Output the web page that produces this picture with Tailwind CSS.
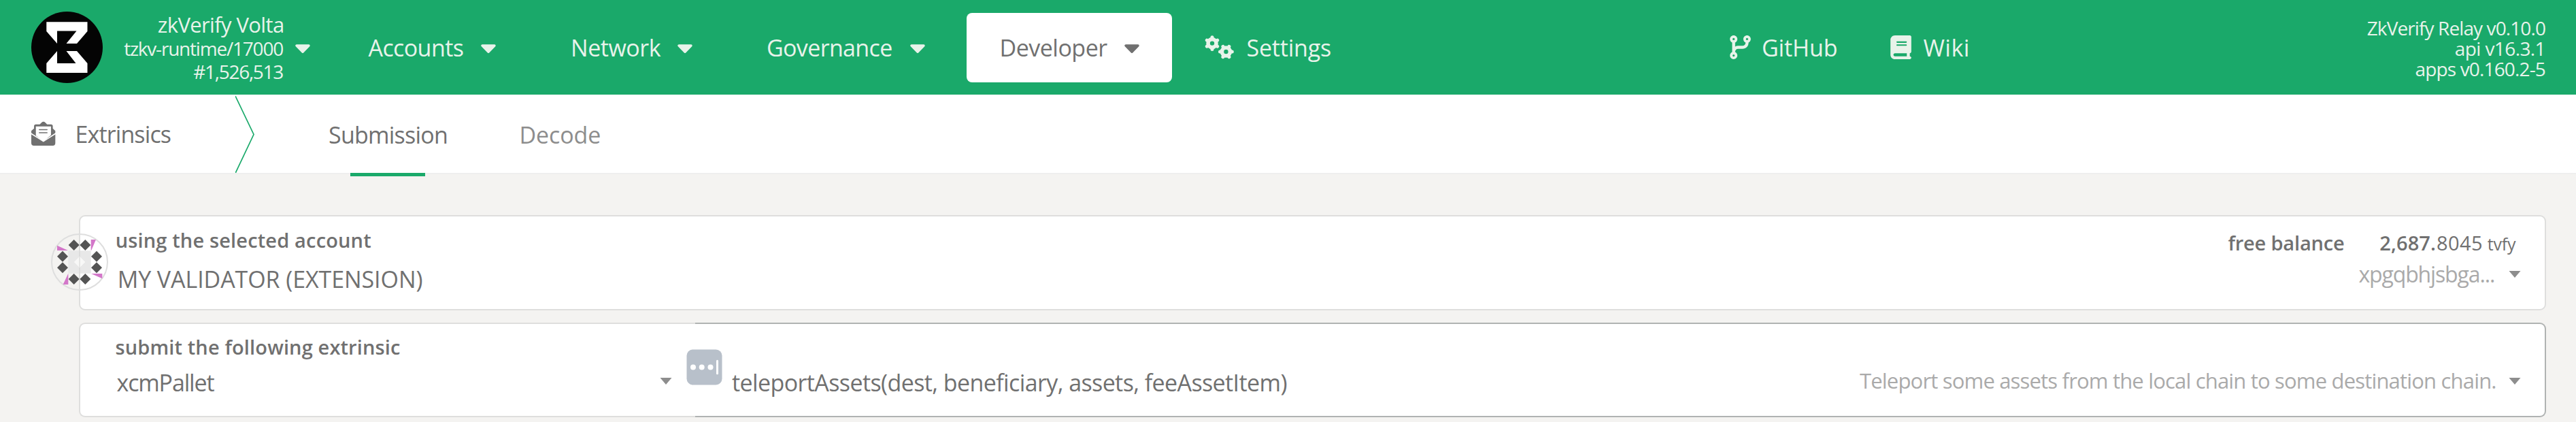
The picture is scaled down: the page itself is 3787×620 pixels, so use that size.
<!DOCTYPE html>
<html lang="en">
<head>
<meta charset="utf-8">
<title>zkVerify Volta - Extrinsics</title>
<script src="https://cdn.jsdelivr.net/npm/@tailwindcss/browser@4"></script>
</head>
<body class="h-[620px] overflow-hidden bg-[#f4f3f1] font-['Open_Sans',sans-serif] whitespace-nowrap text-[#707070]">
<svg class="hidden">
  <symbol id="caret" viewBox="0 0 22 13"><path d="M2 2H20L11 11.3Z" fill="currentColor" stroke="currentColor" stroke-width="3.4" stroke-linejoin="round"/></symbol>
  <symbol id="drop" viewBox="0 0 18 10"><path d="M0.5 0H17.5L9 10Z" fill="currentColor"/></symbol>
</svg>

<header class="flex h-[139px] items-center bg-[#1aa96a] pr-[45px] text-[34px] text-[#e8f3ea]">
  <svg class="ml-[46px] h-[105px] w-[105px] shrink-0" viewBox="0 0 105 105">
    <circle cx="52.5" cy="52.5" r="52.5" fill="#040404"/>
    <path fill="#fff" d="M22.3 15.3H82.5V29L67 47H51.5L66.5 28.5H38V47L22.3 29ZM38 58H67L82.5 76V90H22.3V76ZM38 58V76H65.5L51.5 58Z" fill-rule="evenodd"/>
  </svg>
  <div class="flex w-[265px] shrink-0 flex-col items-end pt-[2px] text-[28px] leading-[34px]">
    <div class="-mr-[1.5px] h-[34px] text-[31px] leading-[32px] tracking-[-0.63px]">zkVerify Volta</div>
    <div class="tracking-[-1.21px]">tzkv-runtime/17000</div>
    <div class="tracking-[-1.29px]">#1,526,513</div>
  </div>
  <svg class="ml-[18px] mt-1 h-[13px] w-[22px] shrink-0"><use href="#caret"/></svg>

  <nav class="flex h-full shrink-0 items-center">
    <div class="ml-[84.5px] flex items-center"><span class="w-[166.5px] pt-[2px] pl-px tracking-[-0.6px]">Accounts</span><svg class="mt-1 h-[13px] w-[22px]"><use href="#caret"/></svg></div>
    <div class="ml-[108px] flex items-center"><span class="w-[159px] pt-[2px] pl-[2px] tracking-[-0.45px]">Network</span><svg class="mt-1 h-[13px] w-[22px]"><use href="#caret"/></svg></div>
    <div class="ml-[108px] flex items-center"><span class="w-[212px] pt-[2px] pl-px tracking-[-0.65px]">Governance</span><svg class="mt-1 h-[13px] w-[22px]"><use href="#caret"/></svg></div>
    <div class="ml-[61px] flex h-[102px] w-[302px] items-center rounded-[8px] bg-white pl-[46.5px] text-[#707070]"><span class="w-[185.5px] pt-[2px] pl-[2px] tracking-[-0.5px]">Developer</span><svg class="mt-1 h-[13px] w-[22px]"><use href="#caret"/></svg></div>
    <div class="ml-[48px] flex items-center">
      <svg class="h-[35px] w-[43px]" viewBox="0 0 43 35" fill="none" stroke="currentColor">
        <g transform="translate(11 11.6)">
          <circle r="6" stroke-width="5.6"/>
          <path stroke-width="5" stroke-linecap="round" d="M0-7.4V-8.9M0 7.4V8.9M6.6-3.8L7.7-4.5M-6.6 3.8L-7.7 4.5M6.6 3.8L7.7 4.5M-6.6-3.8L-7.7-4.5"/>
        </g>
        <g transform="translate(31.4 24)">
          <circle r="6" stroke-width="5.6"/>
          <path stroke-width="5" stroke-linecap="round" d="M-7.4 0H-8.9M7.4 0H8.9M-3.8 6.6L-4.5 7.7M3.8-6.6L4.5-7.7M3.8 6.6L4.5 7.7M-3.8-6.6L-4.5-7.7"/>
        </g>
      </svg>
      <span class="ml-[18.5px] pt-[2px] tracking-[-0.2px]">Settings</span>
    </div>
  </nav>

  <div class="ml-auto flex items-center">
    <svg class="h-[35px] w-[31px]" viewBox="0 0 448 512" fill="currentColor"><path d="M80 104a24 24 0 1 0 0-48 24 24 0 1 0 0 48zm80-24c0 32.800-19.700 61-48 73.300v87.800c18.800-10.900 40.700-17.100 64-17.100h96c35.300 0 64-28.700 64-64v-6.700C307.700 141 288 112.800 288 80c0-44.200 35.800-80 80-80s80 35.800 80 80c0 32.800-19.700 61-48 73.300V160c0 70.700-57.300 128-128 128H176c-35.300 0-64 28.700-64 64v6.700c28.300 12.300 48 40.500 48 73.300c0 44.200-35.800 80-80 80s-80-35.800-80-80c0-32.800 19.700-61 48-73.300V352 153.300C19.700 141 0 112.800 0 80C0 35.800 35.800 0 80 0s80 35.800 80 80zm232 0a24 24 0 1 0-48 0 24 24 0 1 0 48 0zM80 456a24 24 0 1 0 0-48 24 24 0 1 0 0 48z"/></svg>
    <span class="ml-[16px] w-[189px] pt-[2px] tracking-[-0.07px]">GitHub</span>
    <svg class="h-[35px] w-[31px]" viewBox="0 0 448 512" fill="currentColor"><path d="M96 0C43 0 0 43 0 96V416c0 53 43 96 96 96H384h32c17.700 0 32-14.300 32-32s-14.300-32-32-32V384c17.700 0 32-14.300 32-32V32c0-17.700-14.300-32-32-32H384 96zm0 384H352v64H96c-17.700 0-32-14.300-32-32s14.300-32 32-32zm32-240c0-8.800 7.200-16 16-16H336c8.800 0 16 7.200 16 16s-7.200 16-16 16H144c-8.800 0-16-7.200-16-16zm16 48H336c8.800 0 16 7.200 16 16s-7.200 16-16 16H144c-8.800 0-16-7.200-16-16s7.200-16 16-16z"/></svg>
    <span class="ml-[17.5px] pt-[2px] tracking-[0.55px]">Wiki</span>
  </div>
  <div class="flex w-[846px] shrink-0 flex-col items-end pt-[3px] text-[28px] leading-[30px]">
    <div class="tracking-[-0.9px]">ZkVerify Relay v0.10.0</div>
    <div class="tracking-[-0.6px]">api v16.3.1</div>
    <div class="tracking-[-0.85px]">apps v0.160.2-5</div>
  </div>
</header>

<div class="flex h-[117px] items-center border-b-2 border-[#eeeeee] bg-white text-[34px]">
  <svg class="ml-[45px] h-[37px] w-[37px]" viewBox="45 40 110 110">
    <path fill="#707070" d="M48 92V82L60 72V62Q60 54 68 54H85L93 46Q101 38 109 46L117 54H134Q142 54 142 62V72L153 82V92L101 126ZM48 95L101 130L153 95V136Q153 147 142 147H59Q48 147 48 136Z"/>
    <path fill="#fff" d="M68 63H134V101L101 129L68 103ZM45 90L101 129L156 90V96L101 131L45 96Z"/>
    <path stroke="#707070" stroke-width="4.500" stroke-linecap="round" d="M83 77.500H117M83 90.500H117"/>
  </svg>
  <span class="ml-[27px] w-[237px] pt-[2px] pl-[1.5px] tracking-[-0.88px]">Extrinsics</span>
  <svg class="h-[115px] w-[29px]" viewBox="0 0 29 115" fill="none" stroke="#1aa96a" stroke-width="1.700"><path d="M0 2L27 58.500L0 115.500"/></svg>
  <div class="relative ml-[108px] flex h-full w-[280.5px] items-center pt-[3px]"><span class="tracking-[-0.76px]">Submission</span>
    <div class="absolute -bottom-[5px] left-[32px] h-[5px] w-[110px] bg-[#1aa96a]"></div></div>
  <span class="pt-[3px] tracking-[-0.1px] text-[#8d8d8d]">Decode</span>
</div>

<main class="flex flex-col gap-[18px] pt-[60px] pl-[116px]">
  <section class="relative flex h-[140px] w-[3627px] justify-between rounded-[9px] border-2 border-[#dededd] bg-white leading-[40px]">
    <div class="pt-[14.75px] pl-[50.7px]">
      <div class="pl-px text-[29px] leading-[40px] font-semibold tracking-[0.15px]">using the selected account</div>
      <div class="mt-[17px] ml-[4px] text-[34px] leading-[40px] tracking-[-0.08px]">MY VALIDATOR (EXTENSION)</div>
    </div>
    <div class="flex flex-col items-end pt-[18.75px]">
      <div class="flex items-baseline text-[29px] leading-[40px]">
        <span class="w-[222.9px] font-semibold tracking-[-0.18px]">free balance</span>
        <span class="w-[83.7px] font-semibold tracking-[0.1px]">2,687.</span>
        <span class="w-[74.7px] tracking-[0.42px]">8045</span>
        <span class="w-[84.3px] text-[25px] font-medium tracking-[-0.17px]">tvfy</span>
      </div>
      <div class="mt-[4.85px] flex items-center pr-[35px] text-[32px] leading-[40px] text-[#aaaaaa]">
        <span class="w-[220.6px] tracking-[-1.14px]">xpgqbhjsbga...</span>
        <svg class="h-[10px] w-[18px] text-[#8d8d8d]"><use href="#drop"/></svg>
      </div>
    </div>
    <svg class="absolute top-[12px] -left-[58px] h-[110px] w-[110px]" viewBox="0 0 330 330">
      <circle cx="171" cy="165" r="123" fill="none" stroke="#dedede" stroke-width="6"/>
      <path fill="#e8e8e8" fill-rule="evenodd" d="M121 115H221V215H121ZM171 141L147 165L171 189L195 165Z"/>
      <path fill="#dcdcdc" d="M168 115h6v100h-6z"/>
      <path fill="#f8f8f7" d="M171 141L195 165L171 189L147 165Z"/>
      <path fill="#e6e6e5" d="M168 144L171 141L174 144V186L171 189L168 186Z"/>
      <path fill="#545454" d="M146 66l24 24-24 24-24-24zM196 66l24 24-24 24-24-24zM246 116l24 24-24 24-24-24zM246 166l24 24-24 24-24-24zM196 216l24 24-24 24-24-24zM146 216l24 24-24 24-24-24zM96 166l24 24-24 24-24-24zM96 116l24 24-24 24-24-24z"/>
      <path fill="#d377c9" d="M72 92L120 114H72ZM221 66H243L223 113H221ZM271 216V238L222 216ZM121 215V264H98Z"/>
    </svg>
  </section>

  <section class="flex h-[139px] w-[3627px]">
    <div class="w-[906px] rounded-l-[9px] border-2 border-r-0 border-[#dededd] bg-white pt-[13.75px] pl-[51.5px]">
      <div class="text-[29px] leading-[40px] font-semibold tracking-[0.13px]">submit the following extrinsic</div>
      <div class="mt-[12px] ml-[2px] flex items-center text-[34px] leading-[40px]">
        <span class="w-[798.500px] tracking-[-1.15px]">xcmPallet</span>
        <svg class="-mt-[3px] h-[10px] w-[18px] text-[#8d8d8d]"><use href="#drop"/></svg>
      </div>
    </div>
    <div class="relative w-[2721px] rounded-r-[9px] border-2 border-l-0 border-[#b0b3b2] bg-white pt-[63px] pr-[35px] pl-[54px]">
      <div class="flex h-[43px] items-center">
        <span class="pt-[2px] text-[34px] leading-[40px] tracking-[-0.6px]">teleportAssets(dest, beneficiary, assets, feeAssetItem)</span>
        <span class="ml-auto w-[954px] pb-[3px] text-[31px] leading-[40px] tracking-[-0.82px] text-[#aaaaaa]">Teleport some assets from the local chain to some destination chain.</span>
        <svg class="-mt-[2px] h-[10px] w-[18px] text-[#8d8d8d]"><use href="#drop"/></svg>
      </div>
      <svg class="absolute top-[37px] -left-[13px] h-[53px] w-[53px]" viewBox="0 0 53 53">
        <rect x=".5" y=".5" width="52" height="52" rx="9" fill="#b8c0ca"/>
        <g fill="#fff"><circle cx="10" cy="26.500" r="4"/><circle cx="22.700" cy="26.500" r="4"/><circle cx="35.500" cy="26.500" r="4"/><rect x="44" y="15.800" width="3" height="21.500" rx="1.500"/></g>
      </svg>
    </div>
  </section>
</main>
</body>
</html>
